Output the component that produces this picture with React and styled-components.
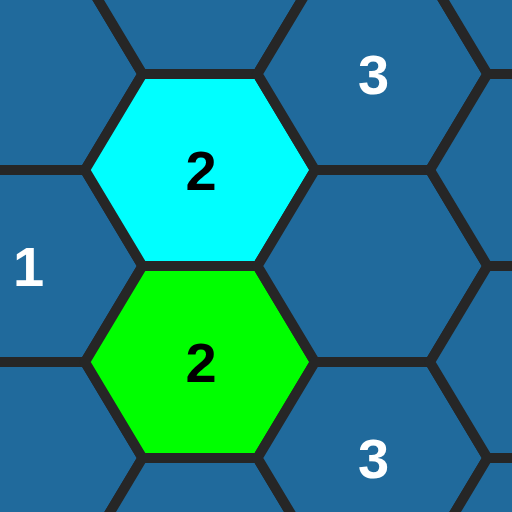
import styled, { createGlobalStyle } from "styled-components";

const GlobalStyle = createGlobalStyle`
  html, body {
    margin: 0;
    padding: 0;
    background: #206a9c;
  }
`;

const Board = styled.svg`
  display: block;
  width: 512px;
  height: 512px;
  background: #206a9c;
`;

const Cell = styled.polygon`
  fill: ${(p) => p.$fill || "#206a9c"};
  stroke: #262626;
  stroke-width: 10;
  stroke-linejoin: miter;
`;

const Label = styled.text`
  font-family: "Liberation Sans", Arial, sans-serif;
  font-weight: bold;
  font-size: 56px;
  fill: ${(p) => (p.$dark ? "#000000" : "#ffffff")};
  text-anchor: middle;
`;

const HALF_W = 115;
const HALF_H = 96;
const COL_STEP = 172.5;

const marked = {
  "0,0": { fill: "#00ffff", text: "2", dark: true },
  "0,1": { fill: "#00ff00", text: "2", dark: true },
  "1,0": { text: "3" },
  "1,2": { text: "3" },
  "-1,1": { text: "1" },
};

function hexPoints(cx, cy) {
  const q = HALF_W / 2;
  return [
    [cx - HALF_W, cy],
    [cx - q, cy - HALF_H],
    [cx + q, cy - HALF_H],
    [cx + HALF_W, cy],
    [cx + q, cy + HALF_H],
    [cx - q, cy + HALF_H],
  ]
    .map((p) => p.join(","))
    .join(" ");
}

function buildCells() {
  const cells = [];
  for (let col = -1; col <= 3; col++) {
    const odd = Math.abs(col) % 2 === 1;
    for (let row = -1; row <= 3; row++) {
      const cx = 200 + col * COL_STEP;
      const cy = (odd ? 74 : 170) + row * HALF_H * 2;
      cells.push({ key: `${col},${row}`, cx, cy, ...(marked[`${col},${row}`] || {}) });
    }
  }
  return cells;
}

export default function App() {
  const cells = buildCells();
  return (
    <>
      <GlobalStyle />
      <Board viewBox="0 0 512 512">
        {cells.map((c) => (
          <Cell key={c.key} points={hexPoints(c.cx, c.cy)} $fill={c.fill} />
        ))}
        {cells
          .filter((c) => c.text)
          .map((c) => (
            <Label key={`t${c.key}`} x={c.cx + 1} y={c.cy + 20} $dark={c.dark}>
              {c.text}
            </Label>
          ))}
      </Board>
    </>
  );
}
